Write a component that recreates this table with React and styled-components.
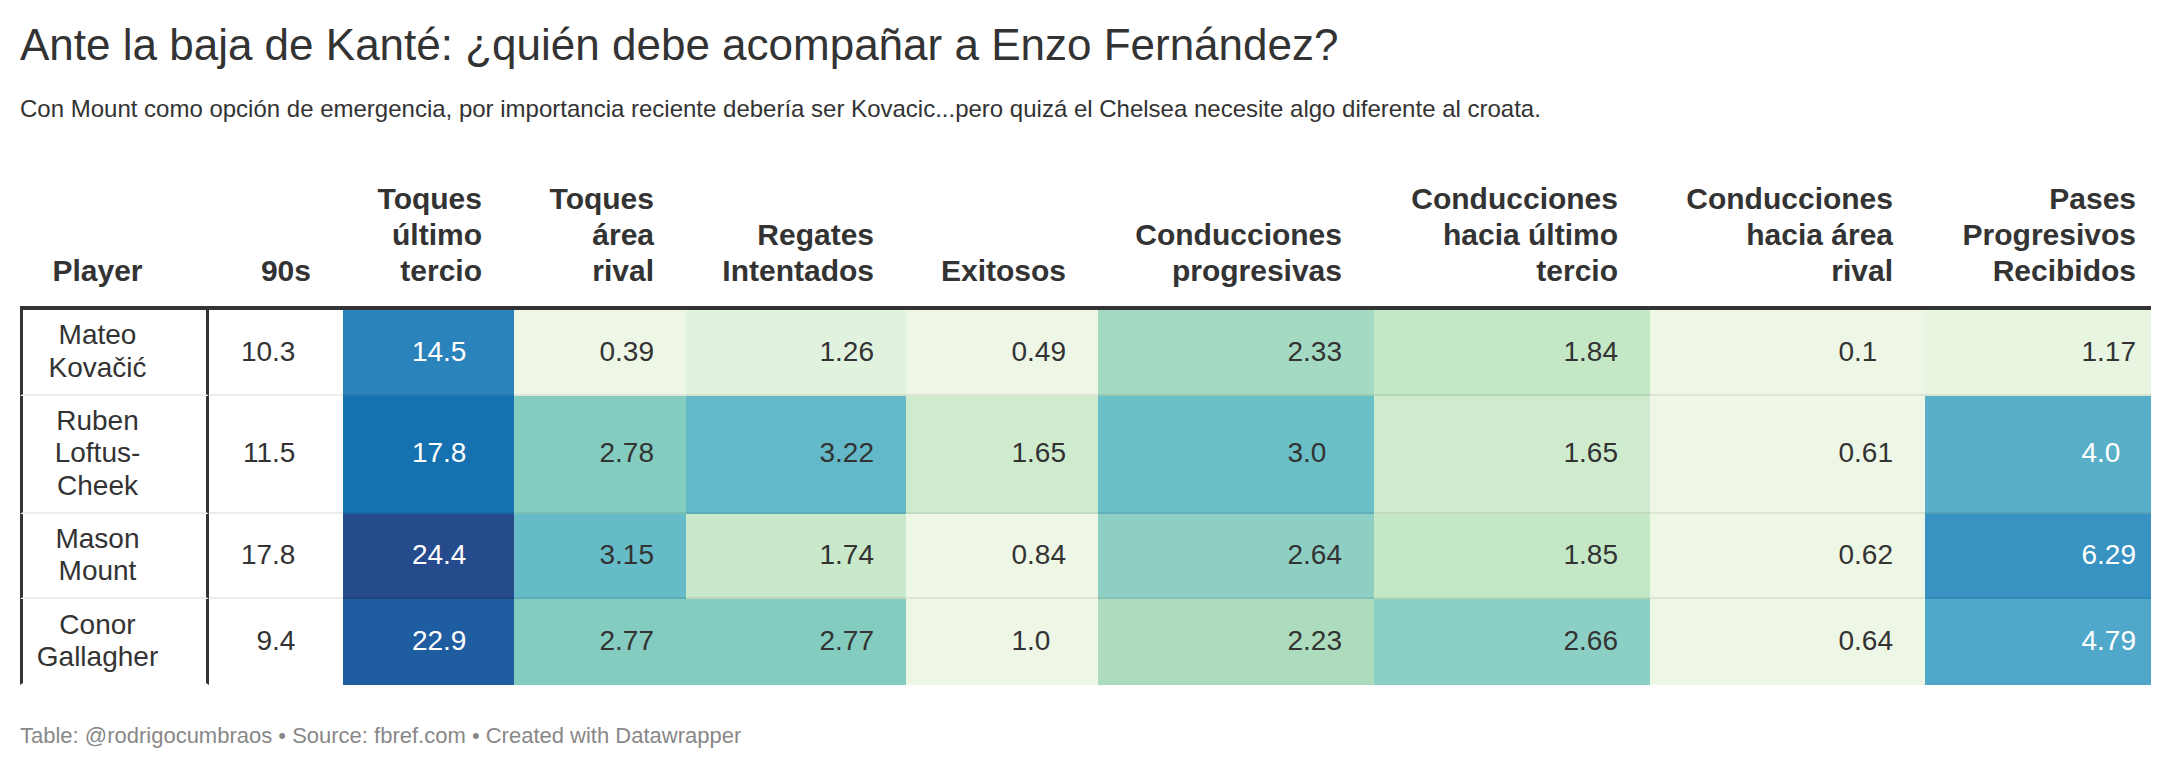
import React from 'react';
import styled, { createGlobalStyle } from 'styled-components';

const GlobalStyle = createGlobalStyle`
  body {
    margin: 0;
    background: #fff;
    font-family: "Liberation Sans", Arial, sans-serif;
    color: #333;
  }
`;

const COLUMNS = '189px 134px 171px 172px 220px 192px 276px 276px 275px 226px';

const Page = styled.div`
  padding: 18px 21px 0 20px;
`;

const Title = styled.h1`
  margin: 0;
  font-size: 44px;
  line-height: 53px;
  font-weight: 400;
  color: #333;
`;

const Description = styled.p`
  margin: 21px 0 0;
  font-size: 24px;
  line-height: 34px;
  color: #333;
`;

const Table = styled.div`
  margin-top: 55px;
  display: flex;
  flex-direction: column;
`;

const HeadRow = styled.div`
  display: grid;
  grid-template-columns: ${COLUMNS};
  border-bottom: 4px solid #333;
`;

const HeadCell = styled.div`
  align-self: end;
  padding: 0 ${p => (p.$last ? 15 : 32)}px 17px 16px;
  font-size: 30px;
  line-height: 36px;
  font-weight: 700;
  text-align: right;
  color: #333;
`;

const PlayerHead = styled(HeadCell)`
  text-align: center;
  padding: 0 42px 17px 8px;
  border-left: 3px solid transparent;
  border-right: 3px solid transparent;
`;

const Row = styled.div`
  display: grid;
  grid-template-columns: ${COLUMNS};
`;

const Cell = styled.div`
  display: flex;
  align-items: center;
  justify-content: flex-end;
  padding: 9.3px ${p => (p.$last ? 15 : 32)}px 9.3px 16px;
  font-size: 28px;
  line-height: 32.5px;
  background: ${p => p.$bg || '#fff'};
  color: ${p => (p.$light ? '#fff' : '#333')};
  border-bottom: 2px solid ${p => (p.$end ? 'transparent' : 'rgba(0, 0, 0, 0.07)')};
`;

const PlayerCell = styled(Cell)`
  justify-content: center;
  text-align: center;
  padding: 9.3px 42px 9.3px 8px;
  border-left: 3px solid #333;
  border-right: 3px solid #333;
`;

const Pad = styled.span`
  visibility: hidden;
`;

const Footer = styled.div`
  margin-top: 36px;
  font-size: 22px;
  line-height: 29px;
  color: #888;
`;

const headers = [
  ['Toques', 'último', 'tercio'],
  ['Toques', 'área', 'rival'],
  ['Regates', 'Intentados'],
  ['Exitosos'],
  ['Conducciones', 'progresivas'],
  ['Conducciones', 'hacia último', 'tercio'],
  ['Conducciones', 'hacia área', 'rival'],
  ['Pases', 'Progresivos', 'Recibidos'],
];

const rows = [
  {
    name: 'Mateo Kovačić',
    n90: '10.3',
    cells: [
      ['14.5', '#2a84bb', true],
      ['0.39', '#eef7e6'],
      ['1.26', '#e1f3de'],
      ['0.49', '#eef7e6'],
      ['2.33', '#a5dac2'],
      ['1.84', '#c4e8c5'],
      ['0.1', '#eef7e6'],
      ['1.17', '#e8f5e0'],
    ],
  },
  {
    name: 'Ruben Loftus-Cheek',
    n90: '11.5',
    cells: [
      ['17.8', '#1571b0', true],
      ['2.78', '#84ccc0'],
      ['3.22', '#63b9c8'],
      ['1.65', '#ceebce'],
      ['3.0', '#6bbfc6'],
      ['1.65', '#ceebce'],
      ['0.61', '#eef7e6'],
      ['4.0', '#5aafc8', true],
    ],
  },
  {
    name: 'Mason Mount',
    n90: '17.8',
    cells: [
      ['24.4', '#254b8c', true],
      ['3.15', '#66bbc8'],
      ['1.74', '#c9e9cb'],
      ['0.84', '#eef7e6'],
      ['2.64', '#8fcfc3'],
      ['1.85', '#c4e8c5'],
      ['0.62', '#eef7e6'],
      ['6.29', '#3893c2', true],
    ],
  },
  {
    name: 'Conor Gallagher',
    n90: '9.4',
    cells: [
      ['22.9', '#1f5da1', true],
      ['2.77', '#84ccc0'],
      ['2.77', '#84ccc0'],
      ['1.0', '#eef7e6'],
      ['2.23', '#acdcbd'],
      ['2.66', '#8ccfc4'],
      ['0.64', '#eef7e6'],
      ['4.79', '#4fa7ca', true],
    ],
  },
];

// numbers line up on the decimal point, as if all had two decimals
function Num({ value }) {
  const decimals = value.split('.')[1].length;
  return (
    <span>
      {value}
      {decimals < 2 && <Pad>0</Pad>}
    </span>
  );
}

function Lines({ lines }) {
  return lines.map((line, i) => (
    <React.Fragment key={i}>
      {i > 0 && <br />}
      {line}
    </React.Fragment>
  ));
}

export default function App() {
  return (
    <Page>
      <GlobalStyle />
      <Title>Ante la baja de Kanté: ¿quién debe acompañar a Enzo Fernández?</Title>
      <Description>
        Con Mount como opción de emergencia, por importancia reciente debería ser Kovacic...pero quizá el Chelsea necesite algo diferente al croata.
      </Description>
      <Table>
        <HeadRow>
          <PlayerHead>Player</PlayerHead>
          <HeadCell>90s</HeadCell>
          {headers.map((h, i) => (
            <HeadCell key={i} $last={i === headers.length - 1}>
              <Lines lines={h} />
            </HeadCell>
          ))}
        </HeadRow>
        {rows.map((row, r) => {
          const end = r === rows.length - 1;
          return (
            <Row key={row.name}>
              <PlayerCell $end={end}>{row.name}</PlayerCell>
              <Cell $end={end}>
                <Num value={row.n90} />
              </Cell>
              {row.cells.map(([value, bg, light], i) => (
                <Cell
                  key={i}
                  $bg={bg}
                  $light={light}
                  $end={end}
                  $last={i === row.cells.length - 1}
                >
                  <Num value={value} />
                </Cell>
              ))}
            </Row>
          );
        })}
      </Table>
      <Footer>Table: @rodrigocumbraos • Source: fbref.com • Created with Datawrapper</Footer>
    </Page>
  );
}
